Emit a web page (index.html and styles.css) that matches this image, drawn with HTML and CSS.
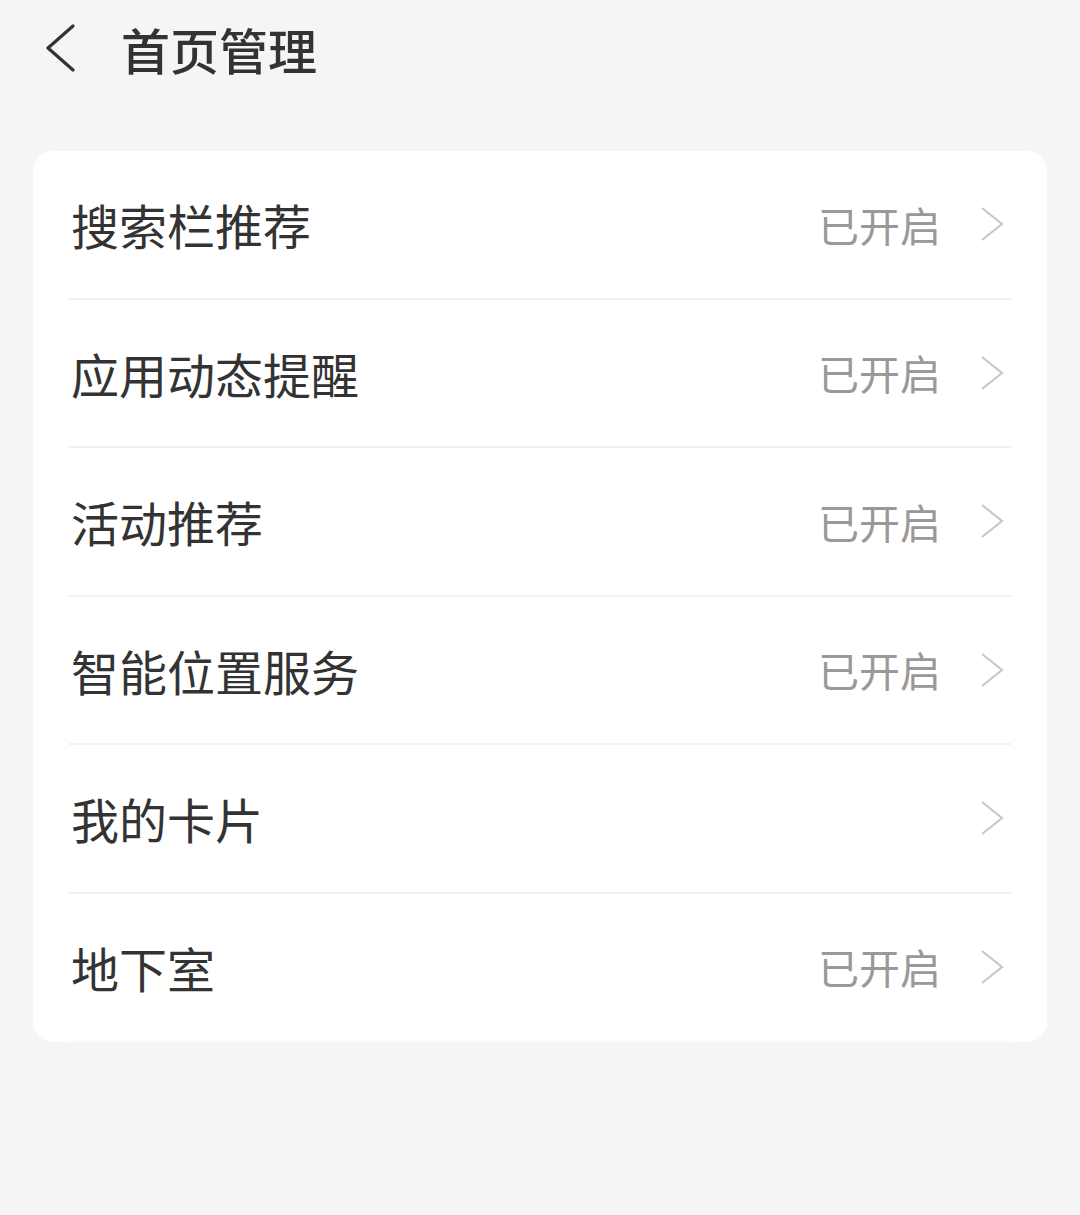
FILE: index.html
```html
<!DOCTYPE html>
<html lang="zh-CN">
<head>
    <meta charset="UTF-8">
    <meta name="viewport" content="width=device-width, initial-scale=1.0">
    <title>首页管理</title>
    <link rel="stylesheet" href="styles.css">
</head>
<body>
    <div class="header">
        <svg class="back" width="32" height="48" viewBox="0 0 32 48">
            <path d="M29 2 L4 24 L29 46" fill="none" stroke="#333" stroke-width="3.2" stroke-linecap="round" stroke-linejoin="round"/>
        </svg>
        <h1>首页管理</h1>
    </div>

    <div class="card">
        <div class="row">
            <span class="label">搜索栏推荐</span>
            <span class="value">已开启</span>
            <svg class="arrow" width="26" height="36" viewBox="0 0 26 36"><path d="M3 2 L23 18 L3 34" fill="none" stroke="#c8c8c8" stroke-width="2.2"/></svg>
        </div>
        <div class="row">
            <span class="label">应用动态提醒</span>
            <span class="value">已开启</span>
            <svg class="arrow" width="26" height="36" viewBox="0 0 26 36"><path d="M3 2 L23 18 L3 34" fill="none" stroke="#c8c8c8" stroke-width="2.2"/></svg>
        </div>
        <div class="row">
            <span class="label">活动推荐</span>
            <span class="value">已开启</span>
            <svg class="arrow" width="26" height="36" viewBox="0 0 26 36"><path d="M3 2 L23 18 L3 34" fill="none" stroke="#c8c8c8" stroke-width="2.2"/></svg>
        </div>
        <div class="row">
            <span class="label">智能位置服务</span>
            <span class="value">已开启</span>
            <svg class="arrow" width="26" height="36" viewBox="0 0 26 36"><path d="M3 2 L23 18 L3 34" fill="none" stroke="#c8c8c8" stroke-width="2.2"/></svg>
        </div>
        <div class="row">
            <span class="label">我的卡片</span>
            <span class="value"></span>
            <svg class="arrow" width="26" height="36" viewBox="0 0 26 36"><path d="M3 2 L23 18 L3 34" fill="none" stroke="#c8c8c8" stroke-width="2.2"/></svg>
        </div>
        <div class="row">
            <span class="label">地下室</span>
            <span class="value">已开启</span>
            <svg class="arrow" width="26" height="36" viewBox="0 0 26 36"><path d="M3 2 L23 18 L3 34" fill="none" stroke="#c8c8c8" stroke-width="2.2"/></svg>
        </div>
    </div>
</body>
</html>
```

FILE: styles.css
```css
body {
    font-family: "Noto Sans CJK SC", "Noto Sans", sans-serif;
    background-color: #f5f5f5;
    color: #333;
    margin: 0;
    padding: 0;
}
.header {
    display: flex;
    align-items: center;
    height: 96px;
    padding: 0 0 0 44px;
}
.back {
    display: block;
    margin-right: 45px;
}
.header h1 {
    margin: 0;
    font-size: 49px;
    font-weight: 500;
    color: #333;
    line-height: 1;
}
.card {
    margin: 55px 33px 0;
    background: #fff;
    border-radius: 20px;
    padding: 0 36px;
}
.row {
    display: flex;
    align-items: center;
    height: 146.5px;
    border-bottom: 2px solid #f2f2f2;
}
.row:last-child {
    border-bottom-color: #fafafa;
}
.label {
    flex: 1;
    font-size: 48px;
    color: #333;
    line-height: 1;
    padding-left: 2px;
}
.value {
    font-size: 41px;
    color: #999;
    line-height: 1;
    margin-right: 38px;
}
.arrow {
    display: block;
    margin-right: 6px;
}
```
